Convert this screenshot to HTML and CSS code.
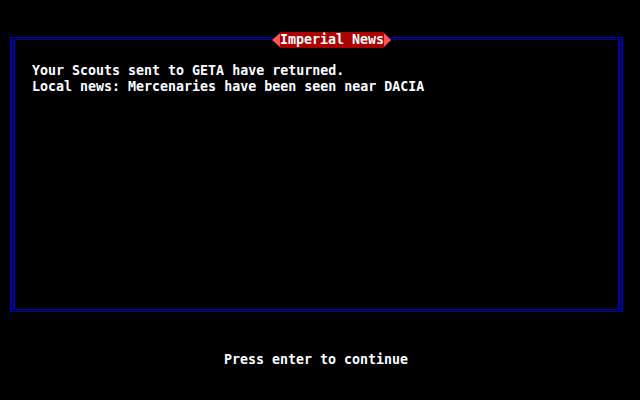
FILE: index.html
```html
<!DOCTYPE html>
<html>
<head>
<meta charset="utf-8">
<link rel="stylesheet" href="styles.css">
</head>
<body>
<div class="screen">
  <div class="frame">
    <div class="title">
      <span class="arrow arrow-left"></span>
      <span class="title-text">Imperial News</span>
      <span class="arrow arrow-right"></span>
    </div>
    <div class="inner">
      <div class="line">Your Scouts sent to GETA have returned.</div>
      <div class="line">Local news: Mercenaries have been seen near DACIA</div>
    </div>
  </div>
  <div class="prompt">Press enter to continue</div>
</div>
</body>
</html>
```
FILE: styles.css
```css
html, body {
  margin: 0;
  padding: 0;
  background: #000;
}
.screen {
  width: 640px;
  height: 400px;
  background: #000;
  color: #fff;
  font-family: "DejaVu Sans Mono", "Liberation Mono", monospace;
  font-weight: bold;
  font-size: 13.3px;
  line-height: 16px;
  padding-top: 37px;
  box-sizing: border-box;
  overflow: hidden;
}
.frame {
  position: relative;
  margin-left: 10px;
  width: 613px;
  height: 275px;
  box-sizing: border-box;
  border-style: solid;
  border-color: #0000b4;
  border-width: 1px 2px;
  padding: 1px 1px;
}
.inner {
  height: 100%;
  box-sizing: border-box;
  border-style: solid;
  border-color: #0000b4;
  border-width: 1px 2px;
  padding: 23px 17px 0;
}
.line {
  white-space: pre;
  height: 16px;
}
.title {
  position: absolute;
  left: 260px;
  top: -6px;
  display: flex;
  align-items: center;
  height: 16px;
}
.title-text {
  background: #aa0000;
  color: #fff;
  height: 16px;
  width: 104px;
  text-align: center;
  white-space: pre;
}
.arrow {
  width: 0;
  height: 0;
  border-top: 7px solid transparent;
  border-bottom: 7px solid transparent;
}
.arrow-left {
  border-right: 8px solid #ff5555;
}
.arrow-right {
  border-left: 7px solid #ff5555;
}
.prompt {
  margin-top: 40px;
  padding-left: 224px;
  white-space: pre;
}
```
